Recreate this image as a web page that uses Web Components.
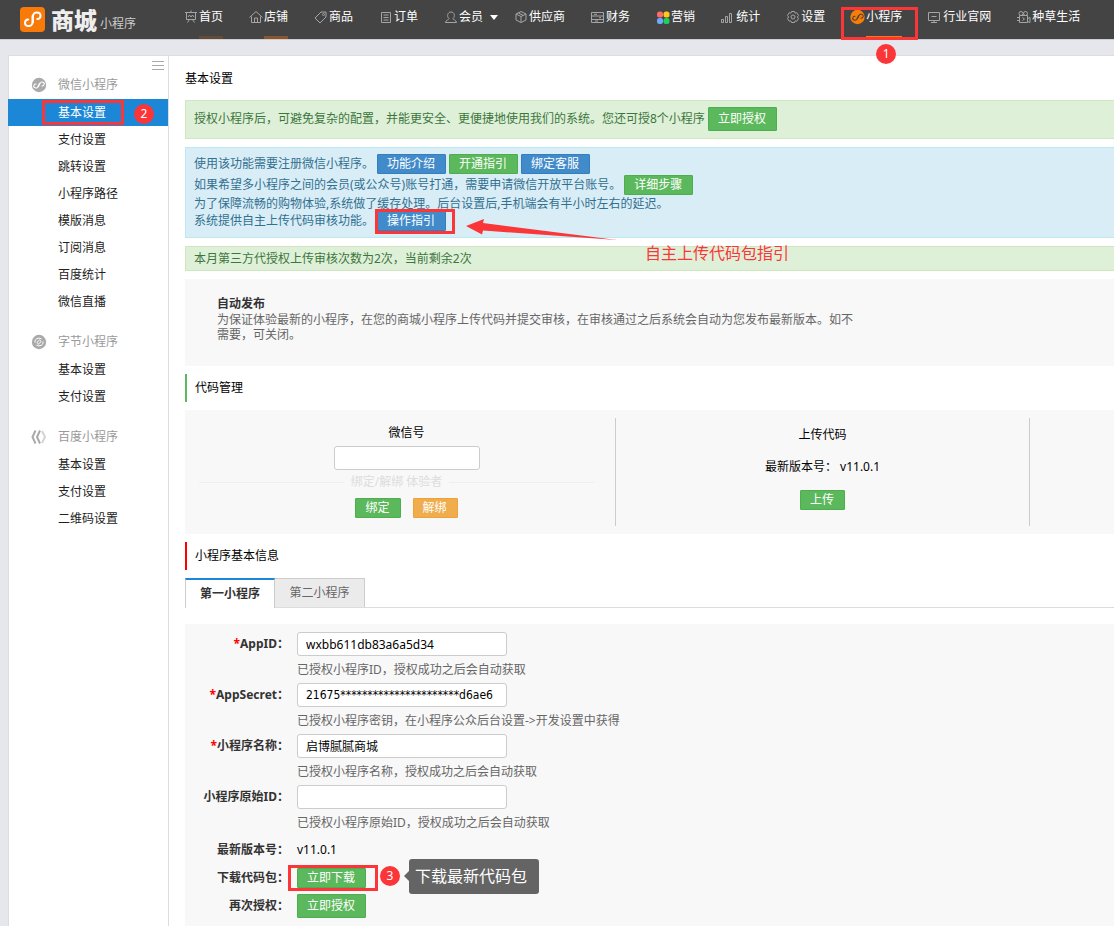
<!DOCTYPE html>
<html lang="zh-CN">
<head>
<meta charset="utf-8">
<meta name="viewport" content="width=device-width, initial-scale=1">
<title>商城小程序 - 基本设置</title>
<style>
body { margin: 0; background: #e6e7ec; color: #000; font: 12px/18px "Noto Sans", "Noto Sans CJK SC", sans-serif; }
</style>
</head>
<body>
<mall-app></mall-app>
<script>
const define = (name, html, setup) => {
  const template = document.createElement('template');
  template.innerHTML = html;
  customElements.define(name, class extends HTMLElement {
    constructor() {
      super();
      this.attachShadow({ mode: 'open' }).append(template.content.cloneNode(true));
    }
    connectedCallback() {
      if (setup && !this.ready) { this.ready = true; setup(this, this.shadowRoot); }
    }
  });
};

/* Icons: 16 x 16 line drawings */
const mini = '<path d="M8.3 10.2V5.9c0-1.2 1-2.1 2.1-2.1s2.1.8 2.1 1.9-.8 1.8-1.8 1.9M7.7 5.8v4.3c0 1.2-1 2.1-2.1 2.1s-2.1-.8-2.1-1.9.8-1.8 1.8-1.9"/>';
const icons = {
  home: '<path d="M2 3.500h12M3.500 3.500v7h9v-7M5 8l1.500-2L8 8l1.500-2L11 8M8 1.500v2M6.500 10.500l-2 3M9.500 10.500l2 3"/>',
  shop: '<path d="M1.500 8.500 8 2.500l6.500 6M3.500 7.500v6h9v-6M6.500 13.500V9h3v4.500"/>',
  tag: '<path d="M8 3h5v5l-6 6-5-5z"/><circle cx="10.500" cy="5.500" r="1"/>',
  order: '<path d="M3.500 3.500h9v10h-9zM5.500 6h5M5.500 8.500h5M5.500 11h5"/>',
  user: '<path d="M6 9.500C3.500 7.500 4.500 3 8 3s4.500 4.500 2 6.500c0 1.500 3 1 3.500 4h-11c.5-3 3.500-2.500 3.500-4z"/>',
  box: '<path d="M8 2.500l5 2.500v6L8 13.500 3 11V5zM3 5l5 2.500L13 5M8 7.500v6M5.500 4l5 2.500"/>',
  money: '<path d="M1.500 3.500h12v10h-12zM1.500 7h12M1.500 10.500h12M4 5.300h3M9 8.700h2M5 12h3"/>',
  promo: '<g stroke="none"><rect x="2" y="2.500" width="6" height="6" rx="2.500" fill="#ff6b6b"/><rect x="8.500" y="2.500" width="6" height="6" rx="2.500" fill="#ffc915"/><rect x="2" y="9" width="6" height="6" rx="2.500" fill="#6fa9ff"/><rect x="8.500" y="9" width="6" height="6" rx="2.500" fill="#22cf57"/></g>',
  stats: '<path d="M1.500 10.500h2v3h-2zM5.500 7.500h2v6h-2zM9.500 4.500h2v9h-2z"/>',
  gear: '<path d="M6.500 2.500h3l.6 1.600 1.700-.3 1.700 2.600L12.400 8l1.100 1.600-1.700 2.600-1.700-.3-.6 1.600h-3l-.6-1.600-1.700.3-1.700-2.600L3.600 8 2.500 6.400l1.700-2.600 1.700.3z"/><circle cx="8" cy="8" r="2"/>',
  mini: '<circle cx="7.500" cy="8" r="7.200" fill="#f77d0b" stroke="none"/><g stroke="#59412c" transform="rotate(25 7.500 8)">' + mini + '</g>',
  site: '<path d="M1.500 3.500h11v8h-11zM7 11.500v2M4 13.500h6M4.500 7.500h5"/>',
  film: '<circle cx="5" cy="4.500" r="2"/><circle cx="9.500" cy="4.500" r="2"/><path d="M3.500 6.500h8v7h-8zM1 8.500h2.500M1 11.500h2.500M11.500 9.500l2.500-1v5l-2.500-1M6.500 8.500l2 1.500-2 1.500"/>',
  wechat: '<circle cx="8" cy="8" r="7.200" fill="#aaa" stroke="none"/><g stroke="#fff" transform="rotate(25 8 8)">' + mini + '</g>',
  byte: '<circle cx="8" cy="8" r="7.200" fill="#aaa" stroke="none"/><path stroke="#fff" d="M4 8.500a4 3.500 0 0 1 6.500-3.500M12 7.500a4 3.500 0 0 1-6.500 3.500M5.800 8.500 8.500 6l1.700 1.500L7.500 10z"/>',
  baidu: '<path stroke="#aaa" stroke-width="2" d="M4.500 1.500 1.500 8l3 6.500M9 1.500 6 8l3 6.500"/><path stroke="#d4d4d4" stroke-width="2" d="m11 2 3 6-3 6"/>'
};
customElements.define('mall-icon', class extends HTMLElement {
  static observedAttributes = ['name'];
  constructor() {
    super();
    this.attachShadow({ mode: 'open' }).innerHTML =
      '<style>:host{display:block;width:16px;height:16px;color:#a5a5a5;flex:none}svg{display:block;width:100%;height:100%;fill:none;stroke:currentColor}</style><svg viewBox="0 0 16 16" aria-hidden="true"></svg>';
  }
  attributeChangedCallback(attribute, previous, name) {
    this.shadowRoot.querySelector('svg').innerHTML = icons[name] || '';
  }
});

/* Annotation marks laid over the interface */
define('mark-frame', '<style>:host{display:block;position:absolute;box-sizing:border-box;border:3px solid #fb3638;pointer-events:none}</style>');
define('mark-dot', '<style>:host{display:block;position:absolute;z-index:2;width:20px;height:20px;border-radius:50%;background:#fb3638;color:#fff;text-align:center;font-size:12px;line-height:20px}</style><slot></slot>');

define('ui-button', `<style>
:host{display:block;flex:none}
button{display:block;box-sizing:border-box;height:20px;padding:0 10px 0 9px;border:1px solid #4cae4c;border-radius:1px;background:#5cb85c;color:#fff;font:inherit;line-height:18px;white-space:nowrap}
:host([tone=blue]) button{background:#428bca;border-color:#357ebd}
:host([tone=orange]) button{background:#f0ad4e;border-color:#eea236}
:host([large]) button{height:24px;line-height:22px}
</style><button type="button"><slot></slot></button>`);

define('nav-item', `<style>
:host{display:block;position:relative;flex:none}
a{display:flex;height:39px;color:#fff;text-decoration:none;white-space:nowrap}
mall-icon{margin-top:9px}
span{box-sizing:border-box;padding-top:8px;border-bottom:3px solid transparent}
:host([line=faint]) span{border-color:#654a35}
:host([line=soft]) span{border-color:#8a5630}
:host([line=on]) span{border-color:#f77d0b}
i{display:none;margin:15px 0 0 7px;width:0;height:0;border:4px solid transparent;border-top:5px solid #fff;border-bottom:0}
:host([menu]){margin-right:-10px}
:host([menu]) i{display:block}
</style><a href="#"><mall-icon></mall-icon><span><slot></slot></span><i></i></a><slot name="mark"></slot>`,
  (el, root) => root.querySelector('mall-icon').setAttribute('name', el.getAttribute('icon')));

define('mall-header', `<style>
:host{display:flex;height:39px;background:#444;border-bottom:1px solid #cfcfd2;color:#fff}
.brand{display:flex;flex:none;width:163px;padding-left:20px;color:#eee;text-decoration:none;box-sizing:border-box;margin-right:20px}
.brand svg{width:25px;height:25px;margin:7px 6px 0 0}
b{font-size:23px;line-height:40px;font-weight:900}
small{font-size:12px;line-height:48px;margin-left:3px;color:#ccc;white-space:nowrap}
nav{display:flex;gap:25px}
mark-frame{inset:7px -16px -1px -9px}
mark-dot{left:26px;top:44px}
</style>
<a class="brand" href="#"><svg viewBox="0 0 25 25" aria-hidden="true"><rect width="25" height="25" rx="4" fill="#f87a09"/><path d="M13 15.500V9c0-2 1.700-3.500 3.800-3.500s3.700 1.400 3.700 3.300-1.400 3.200-3.200 3.300M12.500 9v6.500c0 2-1.700 3.500-3.800 3.500S5 17.600 5 15.700s1.400-3.200 3.200-3.300" fill="none" stroke="#fff" stroke-width="2" stroke-linecap="round"/></svg><b>商城</b><small>小程序</small></a>
<nav>
<nav-item icon="home" line="faint">首页</nav-item><nav-item icon="shop" line="soft">店铺</nav-item><nav-item icon="tag">商品</nav-item><nav-item icon="order">订单</nav-item><nav-item icon="user" menu>会员</nav-item><nav-item icon="box">供应商</nav-item><nav-item icon="money">财务</nav-item><nav-item icon="promo">营销</nav-item><nav-item icon="stats">统计</nav-item><nav-item icon="gear">设置</nav-item><nav-item icon="mini" line="on">小程序<mark-frame slot="mark"></mark-frame><mark-dot slot="mark">1</mark-dot></nav-item><nav-item icon="site">行业官网</nav-item><nav-item icon="film">种草生活</nav-item>
</nav>`);

define('side-item', `<style>
:host{display:block;position:relative}
a{display:block;padding-left:49px;line-height:27px;color:#222;text-decoration:none}
:host([active]){margin-left:-1px}
:host([active]) a{padding-left:50px;background:#1b87d6;color:#fff}
</style><a href="#"><slot></slot></a><slot name="mark"></slot>`);
define('side-group', `<style>
:host{display:block;margin-bottom:13px}
h2{display:flex;align-items:center;gap:11px;height:28px;margin:0;padding-left:22px;font-size:12px;font-weight:400;color:#999}
</style><h2><mall-icon></mall-icon><span></span></h2><slot></slot>`,
  (el, root) => {
    root.querySelector('mall-icon').setAttribute('name', el.getAttribute('icon'));
    root.querySelector('span').textContent = el.getAttribute('heading');
  });
define('mall-sidebar', `<style>
:host{display:block;box-sizing:border-box;border:1px solid #ddd;border-width:1px 1px 0;background:#fff}
button{display:block;margin:5px 4px 0 auto;width:12px;height:10px;padding:0;border:0;background:repeating-linear-gradient(#aaa 0 1px,transparent 1px 4px)}
mark-frame{left:34px;right:44px;top:1px;bottom:1px}
mark-dot{left:126px;top:5px}
</style><button type="button" aria-label="收起菜单"></button>
<side-group icon="wechat" heading="微信小程序"><side-item active>基本设置<mark-frame slot="mark"></mark-frame><mark-dot slot="mark">2</mark-dot></side-item><side-item>支付设置</side-item><side-item>跳转设置</side-item><side-item>小程序路径</side-item><side-item>模版消息</side-item><side-item>订阅消息</side-item><side-item>百度统计</side-item><side-item>微信直播</side-item></side-group>
<side-group icon="byte" heading="字节小程序"><side-item>基本设置</side-item><side-item>支付设置</side-item></side-group>
<side-group icon="baidu" heading="百度小程序"><side-item>基本设置</side-item><side-item>支付设置</side-item><side-item>二维码设置</side-item></side-group>`);

define('notice-box', `<style>
:host{display:block;position:relative;margin-bottom:8px;padding:3px 8px 2px;border:1px solid #d0e6c0;border-right:0;background:#dff0d8;color:#3c763d}
:host([tone=info]){padding:6px 8px 7px;background:#d9edf7;border-color:#bce8f1;color:#31708f}
:host([roomy]){padding:6px 8px 7px}
</style><slot></slot>`);
define('guide-notice', `<style>
:host{display:block}
.lines{display:grid;grid-template-rows:20px 22px 16px 18px}
.lines>div{display:flex;align-items:center;gap:3px;white-space:nowrap}
.spot{position:relative;flex:none}
mark-frame{inset:-2px -9px -3px -2px}
svg{position:absolute;z-index:1;left:280px;top:70px;width:152px;height:24px;fill:#fb3638}
strong{position:absolute;z-index:1;left:459px;top:93px;font-size:16px;line-height:24px;font-weight:400;color:#fb3638;white-space:nowrap}
</style>
<notice-box tone="info"><div class="lines">
<div><span>使用该功能需要注册微信小程序。</span><ui-button tone="blue">功能介绍</ui-button><ui-button>开通指引</ui-button><ui-button tone="blue">绑定客服</ui-button></div>
<div><span>如果希望多小程序之间的会员(或公众号)账号打通，需要申请微信开放平台账号。</span><ui-button>详细步骤</ui-button></div>
<div>为了保障流畅的购物体验,系统做了缓存处理。后台设置后,手机端会有半小时左右的延迟。</div>
<div><span>系统提供自主上传代码审核功能。</span><div class="spot"><ui-button tone="blue">操作指引</ui-button><mark-frame></mark-frame></div></div>
</div>
<svg viewBox="0 0 152 24" aria-hidden="true"><path d="M0 8 18 1l-1 4 134 17L17 12.500l-1 4z"/></svg>
<strong>自主上传代码包指引</strong></notice-box>`);

define('gray-panel', '<style>:host{display:block;background:#f8f8f8}</style><slot></slot>');
define('section-title', `<style>
:host{display:block;margin:8px 0;border-left:2px solid #5cb85c;padding-left:8px}
:host([tone=red]){border-color:#f00}
h2{margin:0;font-size:12px;line-height:28px;font-weight:400}
</style><h2><slot></slot></h2>`);

define('code-manager', `<style>
:host{display:grid;grid-template-columns:431fr 414fr 84fr;padding:8px 0;background:#f8f8f8}
section{box-sizing:border-box;height:108px;border-right:1px solid #ccc}
.bind{padding:5px 21px 0 14px}
.bind .field{padding-left:20px;text-align:center}
label{display:block;line-height:20px}
input{display:block;box-sizing:border-box;width:146px;height:24px;margin:3px auto 0;padding:0 8px;border:1px solid #ccc;border-radius:3px;background:#fff;font:inherit}
.rule{display:flex;align-items:center;gap:7px;height:24px;color:#ddd}
.rule::before,.rule::after{content:"";flex:1;height:1px;background:#eee}
.actions{display:flex;justify-content:center;gap:12px;padding:4px 0 0 20px}
.upload{display:flex;flex-direction:column;align-items:center;gap:14px;padding-top:8px}
p{margin:0}
</style>
<section class="bind"><div class="field"><label for="wx">微信号</label><input id="wx" type="text"></div><div class="rule">绑定/解绑 体验者</div><div class="actions"><ui-button>绑定</ui-button><ui-button tone="orange">解绑</ui-button></div></section>
<section class="upload"><p>上传代码</p><p>最新版本号：&nbsp;v11.0.1</p><ui-button>上传</ui-button></section>`);

define('program-tabs', `<style>
:host{display:flex;height:30px;box-sizing:border-box;border-bottom:1px solid #ddd;margin-bottom:16px}
button{box-sizing:border-box;width:90px;height:29px;padding:0;border:1px solid #ccc;border-width:1px 1px 0 0;background:#ebebeb;color:#666;font:inherit}
button.on{height:30px;border-width:2px 1px 0;border-top-color:#1b87d6;background:#fff;color:#333;font-weight:700}
</style><button class="on" type="button">第一小程序</button><button type="button">第二小程序</button>`);

define('form-row', `<style>
:host{display:grid;grid-template-columns:104px minmax(0,1fr);column-gap:8px}
label{position:relative;text-align:right;font-weight:700;line-height:24px;color:#333;white-space:nowrap}
em{font-style:normal;color:#f00}
input{display:block;box-sizing:border-box;width:210px;height:24px;padding:0 8px;border:1px solid #ccc;border-radius:3px;background:#fff;color:#000;font:inherit}
:host([masked]) input{font-family:"DejaVu Sans Condensed",Roboto,sans-serif}
p{margin:0;padding:5px 0 4px;color:#666}
</style><label for="f"><em></em><span></span></label><div><input id="f" type="text"><p></p></div>`,
  (el, root) => {
    root.querySelector('em').textContent = el.hasAttribute('required') ? '*' : '';
    root.querySelector('span').textContent = el.getAttribute('label') + '：';
    root.querySelector('input').value = el.getAttribute('value') || '';
    root.querySelector('p').textContent = el.getAttribute('help');
  });
define('info-row', `<style>
:host{display:grid;grid-template-columns:104px minmax(0,1fr);column-gap:8px;align-items:center;height:28px}
b{text-align:right;color:#333;white-space:nowrap}
</style><b></b><div><slot></slot></div>`,
  (el, root) => { root.querySelector('b').textContent = el.getAttribute('label') + '：'; });
define('tip-bubble', `<style>
:host{display:block;position:absolute;box-sizing:border-box;height:35px;padding:0 12px 0 6px;border-radius:3px;background:#646464;color:#fff;font-size:16px;line-height:35px;white-space:nowrap}
:host::before{content:"";position:absolute;left:-5px;top:12px;border:5px solid transparent;border-right-color:#646464;border-left:0}
</style><slot></slot>`);

define('settings-page', `<style>
:host{display:block;box-sizing:border-box;min-width:0;border-top:1px solid #ddd;padding:14px 0 0 16px;background:#fff}
h1{margin:0 0 12px;font-size:12px;line-height:18px;font-weight:400}
.bar{display:flex;align-items:center;gap:3px}
.auto{padding:16px 32px 24px}
.auto div{max-width:640px;color:#666;line-height:15px}
.auto h3{margin:0;font-size:12px;line-height:17px;color:#333}
.form{padding:8px 0 7px}
.spot{position:relative;width:max-content}
mark-frame{inset:-3px -12px -3px -9px}
mark-dot{left:83px;top:-2px}
tip-bubble{left:112px;top:-9px}
</style>
<h1>基本设置</h1>
<notice-box roomy><div class="bar"><span>授权小程序后，可避免复杂的配置，并能更安全、更便捷地使用我们的系统。您还可授8个小程序</span><ui-button large>立即授权</ui-button></div></notice-box>
<guide-notice></guide-notice>
<notice-box>本月第三方代授权上传审核次数为2次，当前剩余2次</notice-box>
<gray-panel><div class="auto"><h3>自动发布</h3><div>为保证体验最新的小程序，在您的商城小程序上传代码并提交审核，在审核通过之后系统会自动为您发布最新版本。如不需要，可关闭。</div></div></gray-panel>
<section-title>代码管理</section-title>
<code-manager></code-manager>
<section-title tone="red">小程序基本信息</section-title>
<program-tabs></program-tabs>
<gray-panel><div class="form">
<form-row required label="AppID" value="wxbb611db83a6a5d34" help="已授权小程序ID，授权成功之后会自动获取"></form-row>
<form-row required masked label="AppSecret" value="21675**********************d6ae6" help="已授权小程序密钥，在小程序公众后台设置-&gt;开发设置中获得"></form-row>
<form-row required label="小程序名称" value="启博腻腻商城" help="已授权小程序名称，授权成功之后会自动获取"></form-row>
<form-row label="小程序原始ID" value="" help="已授权小程序原始ID，授权成功之后会自动获取"></form-row>
<info-row label="最新版本号">v11.0.1</info-row>
<info-row label="下载代码包"><div class="spot"><ui-button>立即下载</ui-button><mark-frame></mark-frame><mark-dot>3</mark-dot><tip-bubble>下载最新代码包</tip-bubble></div></info-row>
<info-row label="再次授权"><ui-button large>立即授权</ui-button></info-row>
</div></gray-panel>`);

define('mall-app', `<style>
:host{display:flex;flex-direction:column;min-height:100vh;overflow-x:clip}
main{display:grid;grid-template-columns:161px minmax(0,1fr);flex:1;padding:15px 0 0 8px}
</style><mall-header></mall-header><main><mall-sidebar></mall-sidebar><settings-page></settings-page></main>`);
</script>
</body>
</html>
